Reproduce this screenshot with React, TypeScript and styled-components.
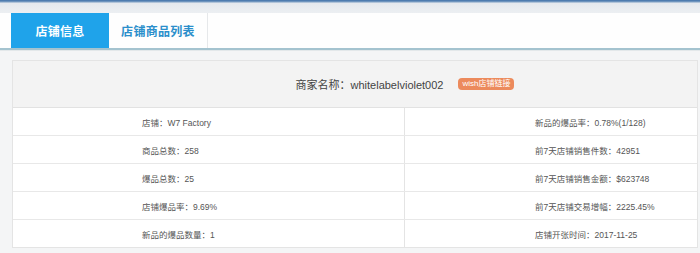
import styled, { createGlobalStyle } from "styled-components";

const GlobalStyle = createGlobalStyle`
    html, body {
        margin: 0;
        padding: 0;
        background: #f4f5f6;
        font-family: "Liberation Sans", "Noto Sans CJK SC", sans-serif;
    }
`;

const tabs = ["店铺信息", "店铺商品列表"];

const rows: [string, string][] = [
    ["店铺：W7 Factory", "新品的爆品率：0.78%(1/128)"],
    ["商品总数：258", "前7天店铺销售件数：42951"],
    ["爆品总数：25", "前7天店铺销售金额：$623748"],
    ["店铺爆品率：9.69%", "前7天店铺交易增幅：2225.45%"],
    ["新品的爆品数量：1", "店铺开张时间：2017-11-25"],
];

const App = () => {
    return (
        <>
            <GlobalStyle />
            <PageWrapper>
                <TopStrip />
                <TabBar>
                    {tabs.map((label, index) => (
                        <Tab key={label} $active={index === 0}>
                            {label}
                        </Tab>
                    ))}
                </TabBar>
                <Content>
                    <Panel>
                        <Header>
                            <MerchantName>商家名称：whitelabelviolet002</MerchantName>
                            <Badge>wish店铺链接</Badge>
                        </Header>
                        {rows.map(([left, right]) => (
                            <Row key={left}>
                                <Cell>{left}</Cell>
                                <Cell $right>{right}</Cell>
                            </Row>
                        ))}
                    </Panel>
                </Content>
            </PageWrapper>
        </>
    );
};

export default App;

const PageWrapper = styled.div`
    width: 700px;
    height: 253px;
    overflow: hidden;
    display: flex;
    flex-direction: column;
`;

const TopStrip = styled.div`
    height: 13px;
    background: linear-gradient(to bottom, #3d6fa8 0px, #7d9fc4 2px, #e4e8ee 3px, #eceff2 13px);
`;

const TabBar = styled.div`
    display: flex;
    height: 35px;
    padding-left: 11px;
    background: #fefefe;
    border-bottom: 2px solid #a4c3cf;
`;

const Tab = styled.div<{ $active?: boolean }>`
    display: flex;
    align-items: center;
    justify-content: center;
    box-sizing: border-box;
    width: ${(p) => (p.$active ? "98px" : "99px")};
    font-size: 12px;
    letter-spacing: 0.3px;
    font-weight: bold;
    color: ${(p) => (p.$active ? "#ffffff" : "#2b8fcb")};
    background: ${(p) => (p.$active ? "#1fa3ea" : "transparent")};
    border-right: ${(p) => (p.$active ? "none" : "1px solid #e6e8ea")};
`;

const Content = styled.div`
    flex: 1;
    padding: 9px 2px 0 12px;
    background: #f4f5f6;
    border-top: 1px solid #e3e8ea;
`;

const Panel = styled.div`
    background: #ffffff;
    border: 1px solid #e4e4e4;
`;

const Header = styled.div`
    height: 47px;
    display: flex;
    align-items: center;
    justify-content: center;
    gap: 15px;
    background: #f3f3f3;
    border-bottom: 1px solid #e2e2e2;
    padding-left: 100px;
    box-sizing: border-box;
`;

const MerchantName = styled.span`
    font-size: 11px;
    color: #444444;
`;

const Badge = styled.span`
    background: #ec8a5c;
    color: #ffffff;
    font-size: 8px;
    line-height: 12px;
    padding: 0 4px;
    border-radius: 4px;
`;

const Row = styled.div`
    display: grid;
    grid-template-columns: 391px 1fr;
    height: 27px;
    border-bottom: 1px solid #e8e8e8;

    &:last-child {
        border-bottom: none;
    }
`;

const Cell = styled.div<{ $right?: boolean }>`
    display: flex;
    align-items: center;
    padding-left: ${(p) => (p.$right ? "130px" : "129px")};
    font-size: 8.5px;
    color: #555555;
    border-left: ${(p) => (p.$right ? "1px solid #e4e4e4" : "none")};
`;
